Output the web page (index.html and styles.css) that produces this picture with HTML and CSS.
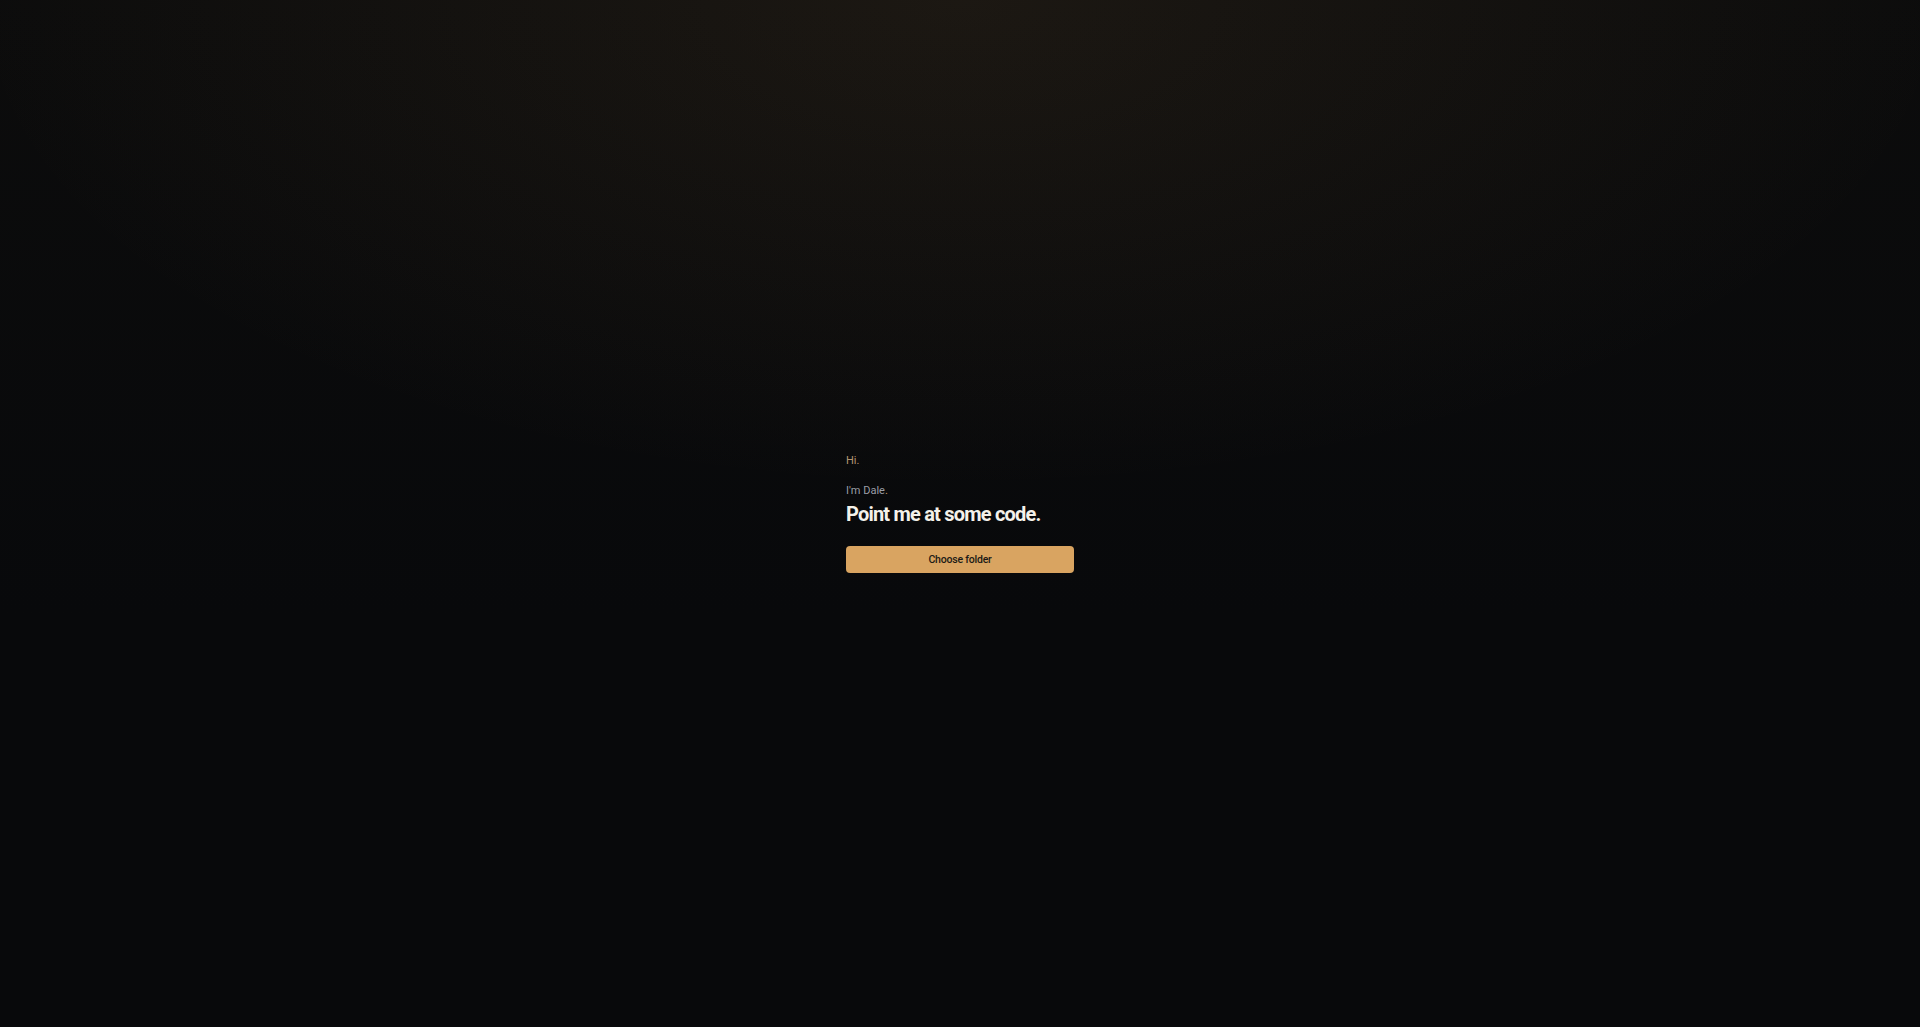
FILE: index.html
```html
<!DOCTYPE html>
<html lang="en">
<head>
    <meta charset="UTF-8">
    <meta name="viewport" content="width=device-width, initial-scale=1.0">
    <title>Dale</title>
    <link rel="stylesheet" href="styles.css">
</head>
<body>

<main class="welcome">
    <p class="hi">Hi.</p>
    <p class="intro">I'm Dale<span class="dot">.</span></p>
    <h1 class="title">Point me at some code.</h1>
    <button class="button">Choose folder</button>
</main>

</body>
</html>
```

FILE: styles.css
```css
html, body {
    height: 100%;
}
body {
    margin: 0;
    font-family: Roboto, "Liberation Sans", sans-serif;
    background-color: #08090b;
    background-image:
        radial-gradient(ellipse 52% 48% at 50% 0%, rgba(217, 164, 97, 0.08), rgba(217, 164, 97, 0) 100%),
        linear-gradient(#0c0c0c, #08090b 60%);
    display: flex;
    align-items: center;
    justify-content: center;
}
.welcome {
    width: 228px;
    display: flex;
    flex-direction: column;
    margin-top: -2px;
}
.hi {
    margin: 0 0 14px;
    font-size: 11px;
    line-height: 16px;
    color: #b39672;
}
.intro {
    margin: 0;
    font-size: 11px;
    line-height: 16px;
    color: #9a9ea6;
}
.dot {
    color: #c99d63;
}
.title {
    margin: 2px 0 0;
    font-size: 20px;
    line-height: 26px;
    font-weight: 700;
    letter-spacing: -0.04em;
    color: #f4f1ea;
}
.button {
    margin-top: 19px;
    height: 27px;
    border: none;
    border-radius: 4px;
    background-color: #d9a461;
    color: #1c1a16;
    font-family: inherit;
    font-size: 10.5px;
    font-weight: 500;
    letter-spacing: -0.02em;
    cursor: pointer;
}
.button:hover {
    background-color: #e2b274;
}
```
